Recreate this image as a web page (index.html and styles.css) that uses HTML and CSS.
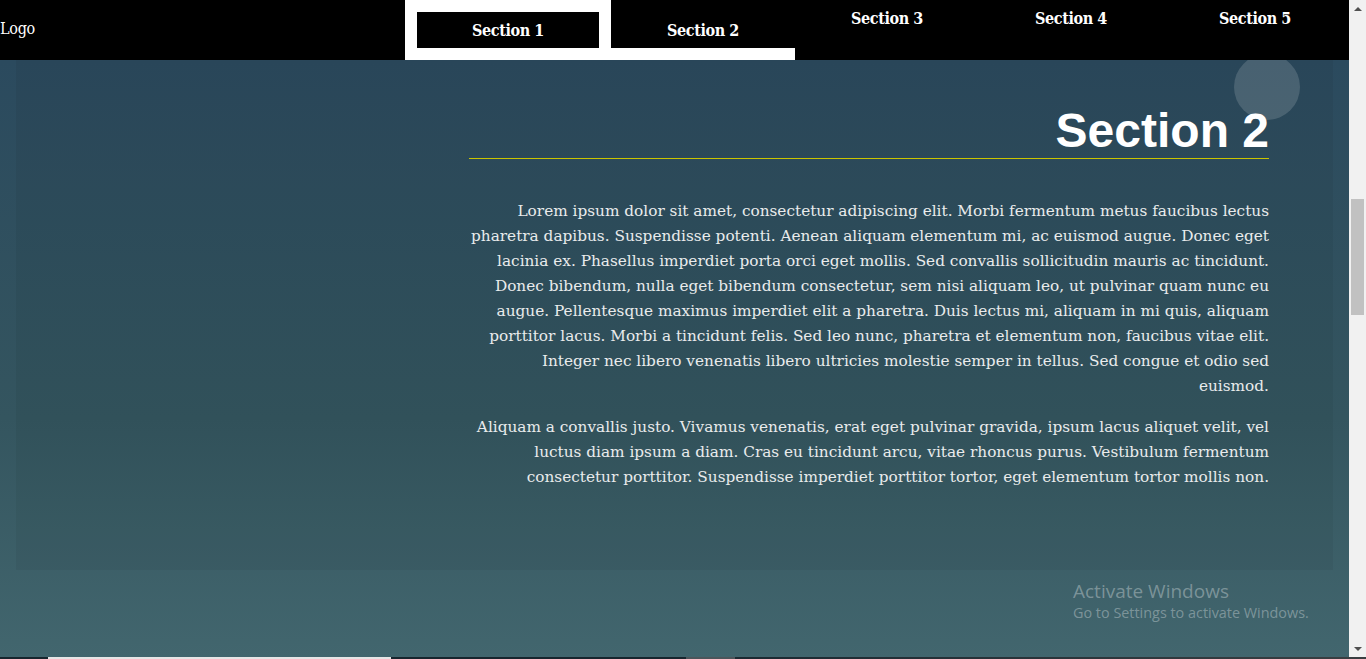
FILE: index.html
```html
<!DOCTYPE html>
<html lang="en">
<head>
<meta charset="utf-8">
<title>Section 2</title>
<link rel="stylesheet" href="styles.css">
</head>
<body>
<div class="screen">
  <div class="window">
    <div class="page">
      <header class="nav">
        <div class="logo">Logo</div>
        <ul class="menu">
          <li class="item item-active"><span class="item-box">Section 1</span></li>
          <li class="item item-current">Section 2</li>
          <li class="item">Section 3</li>
          <li class="item">Section 4</li>
          <li class="item">Section 5</li>
        </ul>
      </header>
      <main class="hero">
        <div class="bubble"></div>
        <section class="panel">
          <div class="content">
            <h1 class="title">Section 2</h1>
            <p class="text">Lorem ipsum dolor sit amet, consectetur adipiscing elit. Morbi fermentum metus faucibus lectus pharetra dapibus. Suspendisse potenti. Aenean aliquam elementum mi, ac euismod augue. Donec eget lacinia ex. Phasellus imperdiet porta orci eget mollis. Sed convallis sollicitudin mauris ac tincidunt. Donec bibendum, nulla eget bibendum consectetur, sem nisi aliquam leo, ut pulvinar quam nunc eu augue. Pellentesque maximus imperdiet elit a pharetra. Duis lectus mi, aliquam in mi quis, aliquam porttitor lacus. Morbi a tincidunt felis. Sed leo nunc, pharetra et elementum non, faucibus vitae elit. Integer nec libero venenatis libero ultricies molestie semper in tellus. Sed congue et odio sed euismod.</p>
            <p class="text">Aliquam a convallis justo. Vivamus venenatis, erat eget pulvinar gravida, ipsum lacus aliquet velit, vel luctus diam ipsum a diam. Cras eu tincidunt arcu, vitae rhoncus purus. Vestibulum fermentum consectetur porttitor. Suspendisse imperdiet porttitor tortor, eget elementum tortor mollis non.</p>
          </div>
        </section>
        <div class="watermark">
          <div class="wm-title">Activate Windows</div>
          <div class="wm-sub">Go to Settings to activate Windows.</div>
        </div>
      </main>
    </div>
    <div class="scrollbar">
      <div class="sb-btn"><span class="arrow-up"></span></div>
      <div class="sb-gap"></div>
      <div class="sb-thumb"></div>
      <div class="sb-rest"></div>
      <div class="sb-btn"><span class="arrow-down"></span></div>
    </div>
  </div>
  <div class="taskbar">
    <div class="tb-a"></div>
    <div class="tb-white"></div>
    <div class="tb-b"></div>
    <div class="tb-grey"></div>
    <div class="tb-c"></div>
  </div>
</div>
</body>
</html>
```
FILE: styles.css
```css
html, body {
  margin: 0;
  padding: 0;
  width: 1366px;
  height: 659px;
  overflow: hidden;
  background: #17262e;
}

.screen {
  display: flex;
  flex-direction: column;
  width: 1366px;
  height: 659px;
}

.window {
  display: flex;
  height: 657px;
}

.page {
  width: 1349px;
  display: flex;
  flex-direction: column;
}

/* NAV */
.nav {
  position: relative;
  z-index: 2;
  height: 60px;
  background: #000;
  display: flex;
  color: #fff;
  font-family: "DejaVu Serif Condensed", "DejaVu Serif", serif;
  font-stretch: condensed;
}

.logo {
  width: 405px;
  font-size: 16px;
  line-height: 20px;
  padding-top: 19px;
  letter-spacing: -0.3px;
}

.menu {
  list-style: none;
  margin: 0;
  padding: 0;
  display: flex;
}

.item {
  width: 184px;
  text-align: center;
  font-weight: bold;
  font-size: 16px;
  line-height: 36px;
  padding-top: 1px;
  letter-spacing: -0.4px;
}

.item-active {
  width: 206px;
  height: 60px;
  box-sizing: border-box;
  padding: 12px;
  background: #fff;
}

.item-box {
  display: block;
  background: #000;
  height: 36px;
  line-height: 38px;
}

.item-current {
  padding-top: 13px;
  height: 35px;
  border-bottom: 12px solid #fff;
}

/* HERO */
.hero {
  position: relative;
  z-index: 1;
  flex: 1;
  background: linear-gradient(to bottom, #2b4a5e 0%, #34555f 60%, #42666e 100%);
}

.bubble {
  position: absolute;
  top: -6px;
  left: 1234px;
  width: 66px;
  height: 66px;
  border-radius: 50%;
  background: rgba(255, 255, 255, 0.15);
}

.panel {
  margin: 0 16px;
  height: 510px;
  box-sizing: border-box;
  background: rgba(0, 0, 0, 0.045);
  padding-top: 43px;
}

.content {
  width: 800px;
  margin-left: 453px;
}

.title {
  margin: 0 0 40px;
  font-family: "Liberation Sans", Arial, sans-serif;
  font-weight: bold;
  font-size: 48px;
  line-height: 55px;
  color: #fff;
  text-align: right;
  border-bottom: 1px solid #c9c400;
}

.text {
  margin: 0 0 16px;
  font-family: "DejaVu Serif", serif;
  font-size: 15.3px;
  line-height: 25px;
  color: #e9ebec;
  text-align: right;
}

.watermark {
  padding: 9px 0 0 1073px;
  font-family: "Open Sans", "Noto Sans", sans-serif;
  color: rgba(255, 255, 255, 0.33);
}

.wm-title {
  font-size: 19px;
  line-height: 24px;
}

.wm-sub {
  font-size: 14.4px;
  line-height: 20px;
}

/* SCROLLBAR */
.scrollbar {
  width: 17px;
  background: #f1f1f1;
  display: flex;
  flex-direction: column;
}

.sb-btn {
  height: 17px;
  display: flex;
  align-items: center;
  justify-content: center;
}

.arrow-up {
  width: 0;
  height: 0;
  border-left: 4px solid transparent;
  border-right: 4px solid transparent;
  border-bottom: 4px solid #505050;
}

.arrow-down {
  width: 0;
  height: 0;
  border-left: 4px solid transparent;
  border-right: 4px solid transparent;
  border-top: 4px solid #505050;
}

.sb-gap {
  height: 182px;
}

.sb-thumb {
  height: 116px;
  margin: 0 2px;
  background: #c1c1c1;
}

.sb-rest {
  flex: 1;
}

/* TASKBAR STRIP */
.taskbar {
  height: 2px;
  display: flex;
}

.tb-a { width: 48px; background: #17262e; }
.tb-white { width: 343px; background: #e6e6e6; }
.tb-b { width: 295px; background: #17262e; }
.tb-grey { width: 49px; background: #4b565b; }
.tb-c { flex: 1; background: linear-gradient(to right, #1b2a32, #3a3f42); }
```
